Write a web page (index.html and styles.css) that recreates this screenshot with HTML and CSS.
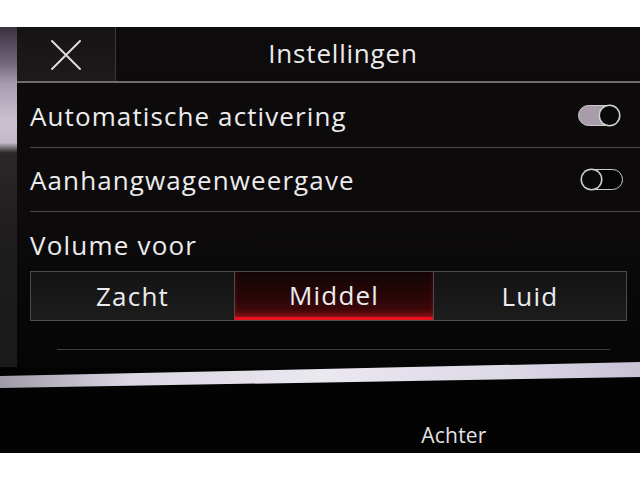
FILE: index.html
```html
<!DOCTYPE html>
<html lang="nl">
<head>
<meta charset="utf-8">
<title>Instellingen</title>
<link rel="stylesheet" href="styles.css">
</head>
<body>
<div class="page">
  <div class="margin-top"></div>
  <div class="device">
    <div class="upper">
      <div class="bezel"></div>
      <div class="screen">
        <header class="header">
          <button class="close" aria-label="Sluiten">
            <svg width="32" height="32" viewBox="0 0 32 32"><path d="M2 2 L30 30 M30 2 L2 30" stroke="#dedbdc" stroke-width="2" fill="none" stroke-linecap="round"/></svg>
          </button>
          <h1 class="title">Instellingen</h1>
        </header>
        <div class="row row-first">
          <span class="label">Automatische activering</span>
          <span class="toggle on"><span class="knob"></span></span>
        </div>
        <div class="row row-second">
          <span class="label">Aanhangwagenweergave</span>
          <span class="toggle off"><span class="knob"></span></span>
        </div>
        <div class="group">
          <div class="group-label">Volume voor</div>
          <div class="segments">
            <div class="seg">Zacht</div>
            <div class="seg active">Middel</div>
            <div class="seg">Luid</div>
          </div>
        </div>
        <div class="next-row"></div>
      </div>
    </div>
    <div class="reflect"></div>
    <div class="lower">
      <span class="achter">Achter</span>
    </div>
  </div>
  <div class="margin-bottom"></div>
</div>
</body>
</html>
```
FILE: styles.css
```css
html, body {
  margin: 0;
  padding: 0;
  background: #ffffff;
}
body {
  font-family: "Open Sans", "DejaVu Sans", sans-serif;
  font-weight: 500;
  color: #ecebed;
}
.page {
  width: 640px;
  height: 480px;
  display: flex;
  flex-direction: column;
  overflow: hidden;
}
.margin-top {
  height: 27px;
  flex: none;
}
.margin-bottom {
  flex: 1;
  background: #ffffff;
}
.device {
  height: 426px;
  flex: none;
  display: flex;
  flex-direction: column;
  background: #030303;
}
.upper {
  height: 340px;
  flex: none;
  display: grid;
  grid-template-columns: 17px 1fr;
}
.bezel {
  background: linear-gradient(180deg, #3a3240 0%, #6e6276 10%, #a99db0 17%, #cbc2cf 28%, #c3bac8 34%, #2a2829 37%, #1f1d1e 60%, #1a1a1a 100%);
}
.screen {
  background: linear-gradient(180deg, #0d0b0c 0%, #0c0a0b 60%, #060506 100%);
  display: flex;
  flex-direction: column;
}
.header {
  height: 54px;
  flex: none;
  display: flex;
  align-items: stretch;
  border-bottom: 2px solid #6e6c6d;
}
.close {
  width: 99px;
  flex: none;
  margin: 0;
  padding: 0;
  border: none;
  border-right: 1px solid #3a3839;
  background: linear-gradient(180deg, #161314 0%, #1d1a1b 100%);
  display: flex;
  align-items: center;
  justify-content: center;
}
.close svg {
  display: block;
  margin-top: 1px;
}
.title {
  flex: 1;
  margin: 0;
  text-align: center;
  font-weight: 500;
  font-size: 26px;
  line-height: 52px;
  padding-right: 70px;
  letter-spacing: 0.8px;
  color: #eceaeb;
}
.row {
  display: flex;
  align-items: center;
  justify-content: space-between;
  margin-left: 13px;
  border-bottom: 1px solid #4a4849;
}
.row-first {
  height: 64px;
}
.row-second {
  height: 63px;
}
.label {
  font-size: 26px;
  letter-spacing: 1.1px;
  padding-top: 1px;
}
.toggle {
  width: 40px;
  height: 19px;
  border: 1.5px solid #cfcbd0;
  border-radius: 11px;
  display: flex;
  align-items: center;
  box-sizing: content-box;
}
.toggle.on {
  margin-right: 20px;
  background: #a99cab;
  justify-content: flex-end;
}
.toggle.off {
  margin-right: 17px;
  background: #050505;
  justify-content: flex-start;
}
.knob {
  width: 19px;
  height: 19px;
  border-radius: 50%;
  background: #0b0a0b;
  box-shadow: 0 0 0 1.5px #d2ced3;
}
.group {
  padding: 16px 13px 0 13px;
}
.group-label {
  font-size: 26px;
  line-height: 34px;
  letter-spacing: 1.2px;
}
.segments {
  margin-top: 9px;
  height: 48px;
  display: grid;
  grid-template-columns: 203px 199px 1fr;
  border: 1px solid #4d4b4c;
}
.seg {
  display: flex;
  align-items: center;
  justify-content: center;
  font-size: 26px;
  letter-spacing: 1.2px;
  background: linear-gradient(180deg, #141314 0%, #1e1d1e 100%);
  border-left: 1px solid #4d4b4c;
  color: #ecebed;
}
.seg:first-child {
  border-left: none;
}
.seg.active {
  background: linear-gradient(180deg, #120506 0%, #2c0607 60%, #4a0a0c 100%);
  border-bottom: 3px solid #e8121c;
  box-shadow: inset 0 -4px 6px -2px rgba(255, 30, 40, 0.5);
}
.next-row {
  margin: 28px 30px 0 40px;
  border-top: 1px solid #3e3c3d;
}
.reflect {
  height: 26px;
  flex: none;
  margin-top: -5px;
  background: linear-gradient(90deg, #9f99a8 0%, #d9d5e2 20%, #ebe8f0 50%, #dcd8e6 80%, #c8c2d4 100%);
  clip-path: polygon(0 14px, 100% 0, 100% 15px, 0 100%);
}
.lower {
  flex: 1;
  display: flex;
  justify-content: center;
  align-items: flex-end;
  padding-bottom: 3px;
  padding-left: 268px;
}
.achter {
  font-size: 21px;
  letter-spacing: 0.2px;
  color: #e2e0e2;
  line-height: 30px;
}
```
